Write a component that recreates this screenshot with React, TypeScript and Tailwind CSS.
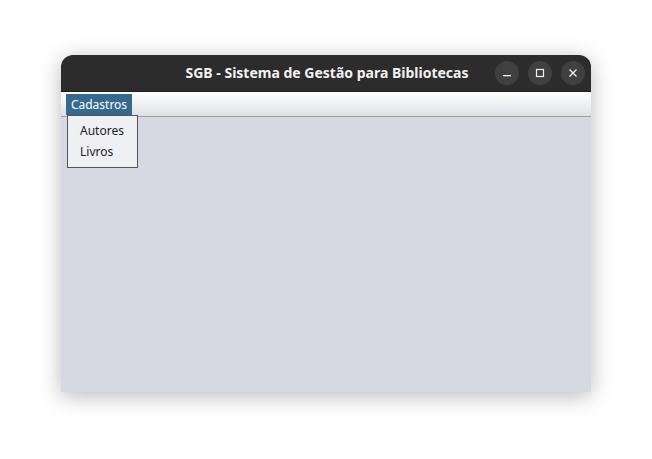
import React from "react";

export default function App() {
  return (
    <div className="w-[652px] h-[459px] bg-white pl-[61px] pt-[55px]" style={{ fontFamily: '"Noto Sans", "Open Sans", sans-serif' }}>
      <div className="relative w-[530px] h-[337px] flex flex-col rounded-t-[12px] shadow-[0_4px_22px_rgba(0,0,0,0.28)]">
        <div className="h-[37px] bg-[#2c2c2c] rounded-t-[12px] flex items-center relative border-b border-[#1e1e1e]">
          <div className="absolute inset-0 flex items-center justify-center text-[14px] font-bold text-[#f2f2f2] pb-[1px] pl-[2px]">
            SGB - Sistema de Gestão para Bibliotecas
          </div>
          <div className="ml-auto mr-[6px] flex items-center gap-[9px] relative">
            <div className="w-[24px] h-[24px] rounded-full bg-[#404040] flex items-center justify-center">
              <svg width="10" height="10" viewBox="0 0 10 10"><rect x="1" y="7" width="8" height="1.3" fill="#f0f0f0" /></svg>
            </div>
            <div className="w-[24px] h-[24px] rounded-full bg-[#404040] flex items-center justify-center">
              <svg width="10" height="10" viewBox="0 0 10 10"><rect x="1.5" y="1.5" width="7" height="7" fill="none" stroke="#f0f0f0" strokeWidth="1.2" /></svg>
            </div>
            <div className="w-[24px] h-[24px] rounded-full bg-[#404040] flex items-center justify-center">
              <svg width="10" height="10" viewBox="0 0 10 10"><path d="M1.5 1.5 L8.5 8.5 M8.5 1.5 L1.5 8.5" stroke="#f0f0f0" strokeWidth="1.3" /></svg>
            </div>
          </div>
        </div>
        <div className="h-[25px] bg-gradient-to-b from-[#ffffff] to-[#dfe1e6] border-b border-[#9c9ea6] flex items-start pt-[2px] pl-[5px]">
          <div className="h-[21px] w-[66px] bg-[#35698e] text-white text-[12px] flex items-center justify-center">
            Cadastros
          </div>
        </div>
        <div className="flex-1 bg-[#d6d9e1]"></div>
        <div className="absolute left-[6px] top-[60px] w-[71px] h-[53px] bg-[#eff0f4] border border-[#555] text-[12px] text-[#222] pl-[12px] pt-[6px] flex flex-col gap-[3px] leading-[18px]">
          <div>Autores</div>
          <div>Livros</div>
        </div>
      </div>
    </div>
  );
}
